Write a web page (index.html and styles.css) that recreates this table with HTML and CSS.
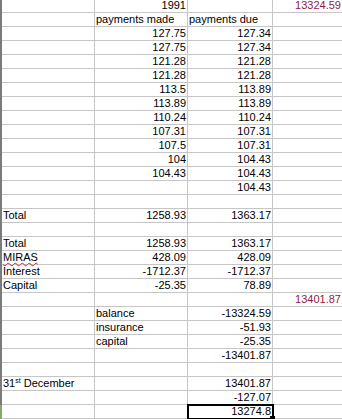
FILE: index.html
```html
<!DOCTYPE html>
<html>
<head>
<meta charset="utf-8">
<link rel="stylesheet" href="styles.css">
</head>
<body>
<div class="sheet">
  <div class="row"><div class="c"></div><div class="c r">1991</div><div class="c"></div><div class="c r red">13324.59</div></div>
  <div class="row"><div class="c"></div><div class="c">payments made</div><div class="c">payments due</div><div class="c"></div></div>
  <div class="row"><div class="c"></div><div class="c r">127.75</div><div class="c r">127.34</div><div class="c"></div></div>
  <div class="row"><div class="c"></div><div class="c r">127.75</div><div class="c r">127.34</div><div class="c"></div></div>
  <div class="row"><div class="c"></div><div class="c r">121.28</div><div class="c r">121.28</div><div class="c"></div></div>
  <div class="row"><div class="c"></div><div class="c r">121.28</div><div class="c r">121.28</div><div class="c"></div></div>
  <div class="row"><div class="c"></div><div class="c r">113.5</div><div class="c r">113.89</div><div class="c"></div></div>
  <div class="row"><div class="c"></div><div class="c r">113.89</div><div class="c r">113.89</div><div class="c"></div></div>
  <div class="row"><div class="c"></div><div class="c r">110.24</div><div class="c r">110.24</div><div class="c"></div></div>
  <div class="row"><div class="c"></div><div class="c r">107.31</div><div class="c r">107.31</div><div class="c"></div></div>
  <div class="row"><div class="c"></div><div class="c r">107.5</div><div class="c r">107.31</div><div class="c"></div></div>
  <div class="row"><div class="c"></div><div class="c r">104</div><div class="c r">104.43</div><div class="c"></div></div>
  <div class="row"><div class="c"></div><div class="c r">104.43</div><div class="c r">104.43</div><div class="c"></div></div>
  <div class="row"><div class="c"></div><div class="c"></div><div class="c r">104.43</div><div class="c"></div></div>
  <div class="row"><div class="c"></div><div class="c"></div><div class="c"></div><div class="c"></div></div>
  <div class="row"><div class="c">Total</div><div class="c r">1258.93</div><div class="c r">1363.17</div><div class="c"></div></div>
  <div class="row"><div class="c"></div><div class="c"></div><div class="c"></div><div class="c"></div></div>
  <div class="row"><div class="c">Total</div><div class="c r">1258.93</div><div class="c r">1363.17</div><div class="c"></div></div>
  <div class="row"><div class="c"><span class="spell">MIRAS</span></div><div class="c r">428.09</div><div class="c r">428.09</div><div class="c"></div></div>
  <div class="row"><div class="c">Interest</div><div class="c r">-1712.37</div><div class="c r">-1712.37</div><div class="c"></div></div>
  <div class="row"><div class="c">Capital</div><div class="c r">-25.35</div><div class="c r">78.89</div><div class="c"></div></div>
  <div class="row"><div class="c"></div><div class="c"></div><div class="c"></div><div class="c r red">13401.87</div></div>
  <div class="row"><div class="c"></div><div class="c">balance</div><div class="c r">-13324.59</div><div class="c"></div></div>
  <div class="row"><div class="c"></div><div class="c">insurance</div><div class="c r">-51.93</div><div class="c"></div></div>
  <div class="row"><div class="c"></div><div class="c">capital</div><div class="c r">-25.35</div><div class="c"></div></div>
  <div class="row"><div class="c"></div><div class="c"></div><div class="c r">-13401.87</div><div class="c"></div></div>
  <div class="row"><div class="c"></div><div class="c"></div><div class="c"></div><div class="c"></div></div>
  <div class="row"><div class="c">31<sup>st</sup> December</div><div class="c"></div><div class="c r">13401.87</div><div class="c"></div></div>
  <div class="row"><div class="c"></div><div class="c"></div><div class="c r">-127.07</div><div class="c"></div></div>
  <div class="row active"><div class="c"></div><div class="c"></div><div class="c r sel">13274.8<span class="handle"></span></div><div class="c"></div></div>
  <div class="row"><div class="c"></div><div class="c"></div><div class="c"></div><div class="c"></div></div>
</div>
</body>
</html>
```
FILE: styles.css
```css
html, body {
  margin: 0;
  padding: 0;
  background: #fff;
  overflow: hidden;
}
.sheet {
  margin-top: -1px;
  font-family: "Liberation Sans", Arial, sans-serif;
  font-size: 11px;
  color: #000;
}
.row {
  display: grid;
  grid-template-columns: 93px 93px 85px 1fr;
  border-left: 2px solid #7b7b7b;
}
.row.active {
  border-left-color: #86a86a;
}
.c {
  height: 13px;
  line-height: 13px;
  border-right: 1px solid #c6c6c6;
  border-bottom: 1px solid #c6c6c6;
  padding: 0 1px;
  white-space: nowrap;
  overflow: visible;
  position: relative;
}
.c:last-child {
  border-right: none;
}
.r {
  text-align: right;
}
.red {
  color: #8e1c44;
}
sup {
  font-size: 7px;
  line-height: 0;
  vertical-align: 4px;
}
.spell {
  text-decoration: underline wavy #e02020;
  text-decoration-thickness: 1px;
  text-underline-offset: 1px;
}
.sel {
  outline: 2px solid #000;
  outline-offset: -1px;
  z-index: 2;
}
.handle {
  position: absolute;
  right: -3px;
  bottom: -3px;
  width: 5px;
  height: 5px;
  background: #000;
}
```
